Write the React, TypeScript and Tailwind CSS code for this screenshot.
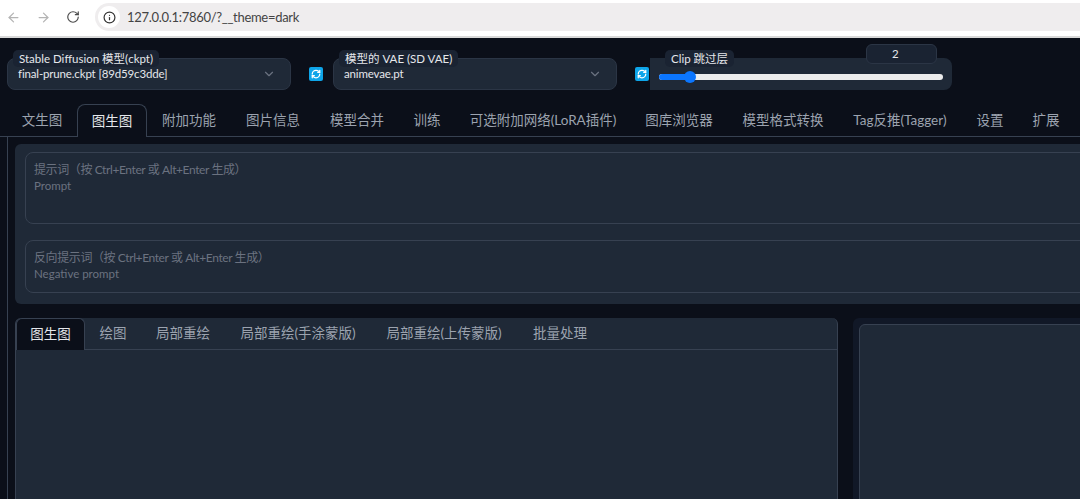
import { ArrowLeft, ArrowRight, ChevronDown, Info, RefreshCw, RotateCw } from "lucide-react";

const mainTabs = [
  { label: "文生图", width: "w-[70px]" },
  { label: "图生图", width: "w-[70px]", active: true },
  { label: "附加功能", width: "w-[84px]" },
  { label: "图片信息", width: "w-[84px]" },
  { label: "模型合并", width: "w-[84px]" },
  { label: "训练", width: "w-[56px]" },
  { label: "可选附加网络(LoRA插件)", width: "w-[176px]" },
  { label: "图库浏览器", width: "w-[96px]" },
  { label: "模型格式转换", width: "w-[112px]" },
  { label: "Tag反推(Tagger)", width: "w-[122px]" },
  { label: "设置", width: "w-[58px]" },
  { label: "扩展", width: "w-[54px]" },
];

const subTabs = [
  { label: "图生图", width: "w-[69px]", active: true },
  { label: "绘图", width: "w-[56px]" },
  { label: "局部重绘", width: "w-[84px]" },
  { label: "局部重绘(手涂蒙版)", width: "w-[146px]" },
  { label: "局部重绘(上传蒙版)", width: "w-[146px]" },
  { label: "批量处理", width: "w-[86px]" },
];

function RefreshButton() {
  return (
    <button className="flex h-[14px] w-[14px] items-center justify-center rounded-[2px] bg-[#0ea5e9]">
      <RefreshCw size={10} strokeWidth={3} className="text-white" />
    </button>
  );
}

function ModelSelect({ label, value }: { label: string; value: string }) {
  return (
    <div className="relative h-[32px] w-[284px] shrink-0 rounded-[8px] border border-[#2b3545] bg-[#1f2937] pl-[10px] pr-[14px] pt-[6px]">
      <span className="absolute left-[5px] top-[-9px] h-[17px] whitespace-nowrap rounded-[5px] bg-[#1a2332] px-[6px] text-[11.5px] leading-[17px] text-[#e5e7eb]">
        {label}
      </span>
      <div className="flex items-center justify-between text-[11.5px] leading-[18px] tracking-[-0.15px] text-[#e5e7eb]">
        <span>{value}</span>
        <ChevronDown size={14} className="text-[#6b7280]" />
      </div>
    </div>
  );
}

function PromptBox({ title, hint, height }: { title: string; hint: string; height: string }) {
  return (
    <div className={`w-[1100px] rounded-[8px] border border-[#374151] bg-[#1f2937] px-[8px] pt-[8px] ${height}`}>
      <p className="text-[12px] leading-[17px] tracking-[-0.4px] text-[#6b7280]">{title}</p>
      <p className="text-[11.5px] leading-[16px] text-[#6b7280]">{hint}</p>
    </div>
  );
}

export default function App() {
  return (
    <div className="h-[499px] w-[1080px] overflow-hidden bg-[#0b0f19] font-['Lato','Noto_Sans_CJK_SC',sans-serif]">
      {/* browser chrome */}
      <div className="flex h-[38px] items-center border-b-2 border-[#d9d9d9] bg-white pb-[2px] pl-[6px]">
        <ArrowLeft size={15} className="text-[#b4b4b4]" />
        <ArrowRight size={15} className="ml-[15px] text-[#b4b4b4]" />
        <RotateCw size={14} className="ml-[15px] text-[#4a4a4a]" />
        <div className="ml-[15px] flex h-[28px] w-[985px] items-center rounded-l-[14px] bg-[#efedee] pl-[3px]">
          <span className="flex h-[22px] w-[22px] items-center justify-center rounded-full bg-white">
            <Info size={13} strokeWidth={2.2} className="text-[#333]" />
          </span>
          <span className="ml-[7px] pt-[2px] text-[13px] tracking-[-0.3px] text-[#444]">127.0.0.1:7860/?__theme=dark</span>
        </div>
      </div>

      {/* model row */}
      <div className="flex items-center pl-[7px] pt-[20px]">
        <ModelSelect label="Stable Diffusion 模型(ckpt)" value="final-prune.ckpt [89d59c3dde]" />
        <div className="ml-[18px] mr-[10px]">
          <RefreshButton />
        </div>
        <ModelSelect label="模型的 VAE (SD VAE)" value="animevae.pt" />
        <div className="ml-[18px]">
          <RefreshButton />
        </div>
        <div className="relative ml-[1px] h-[32px] w-[302px] shrink-0 rounded-r-[8px] bg-[#1f2937]">
          <span className="absolute left-[15px] top-[-8px] h-[17px] whitespace-nowrap rounded-[5px] bg-[#1a2332] px-[6px] text-[11.5px] leading-[17px] text-[#e5e7eb]">
            Clip 跳过层
          </span>
          <span className="absolute left-[216px] top-[-14px] h-[20px] w-[71px] rounded-[6px] border border-[#2b3545] bg-[#1a2332] pl-[25px] text-[11.5px] leading-[18px] text-[#e5e7eb]">
            2
          </span>
          <div className="absolute left-[9px] top-[16px] h-[6px] w-[284px] rounded-full bg-[#ececec]">
            <div className="h-full w-[30px] rounded-l-full bg-[#0b76ff]" />
            <div className="absolute left-[25px] top-[-3px] h-[12px] w-[12px] rounded-full bg-[#0b76ff]" />
          </div>
        </div>
      </div>

      {/* main tabs */}
      <div className="mt-[14px] flex h-[33px] border-b border-[#374151] pl-[7px] text-[13.5px] text-[#9ca3af]">
        {mainTabs.map((tab) => (
          <div
            key={tab.label}
            className={`${tab.width} ${tab.active ? "relative h-[33px] rounded-t-[8px] border border-b-0 border-[#374151] bg-[#0b0f19] text-[#e5e7eb]" : ""} flex shrink-0 items-center justify-center whitespace-nowrap`}
          >
            {tab.label}
          </div>
        ))}
      </div>

      {/* tab content */}
      <div className="ml-[7px] border-l border-[#374151] pl-[7px] pt-[7px]">
        <div className="flex h-[160px] w-[1100px] flex-col gap-[16px] rounded-[6px] bg-[#1f2937] pl-[10px] pt-[8px]">
          <PromptBox title="提示词（按 Ctrl+Enter 或 Alt+Enter 生成）" hint="Prompt" height="h-[72px]" />
          <PromptBox title="反向提示词（按 Ctrl+Enter 或 Alt+Enter 生成）" hint="Negative prompt" height="h-[53px]" />
        </div>

        <div className="mt-[14px] flex w-[1200px] gap-[15px]">
          <div className="h-[200px] w-[823px] shrink-0 rounded-t-[6px] border-x border-[#374151] bg-[#1f2937]">
            <div className="flex h-[32px] border-b border-[#374151] text-[13.5px] text-[#9ca3af]">
              {subTabs.map((tab) => (
                <div
                  key={tab.label}
                  className={`${tab.width} ${tab.active ? "h-[32px] rounded-t-[6px] border-x border-t border-[#374151] bg-[#0b0f19] text-[#e5e7eb]" : ""} flex shrink-0 items-center justify-center whitespace-nowrap`}
                >
                  {tab.label}
                </div>
              ))}
            </div>
          </div>
          <div className="h-[200px] w-[300px] shrink-0 rounded-t-[6px] bg-[#111827] pl-[6px] pt-[6px]">
            <div className="h-full rounded-t-[6px] border border-[#374151] bg-[#1f2937]" />
          </div>
        </div>
      </div>
    </div>
  );
}
